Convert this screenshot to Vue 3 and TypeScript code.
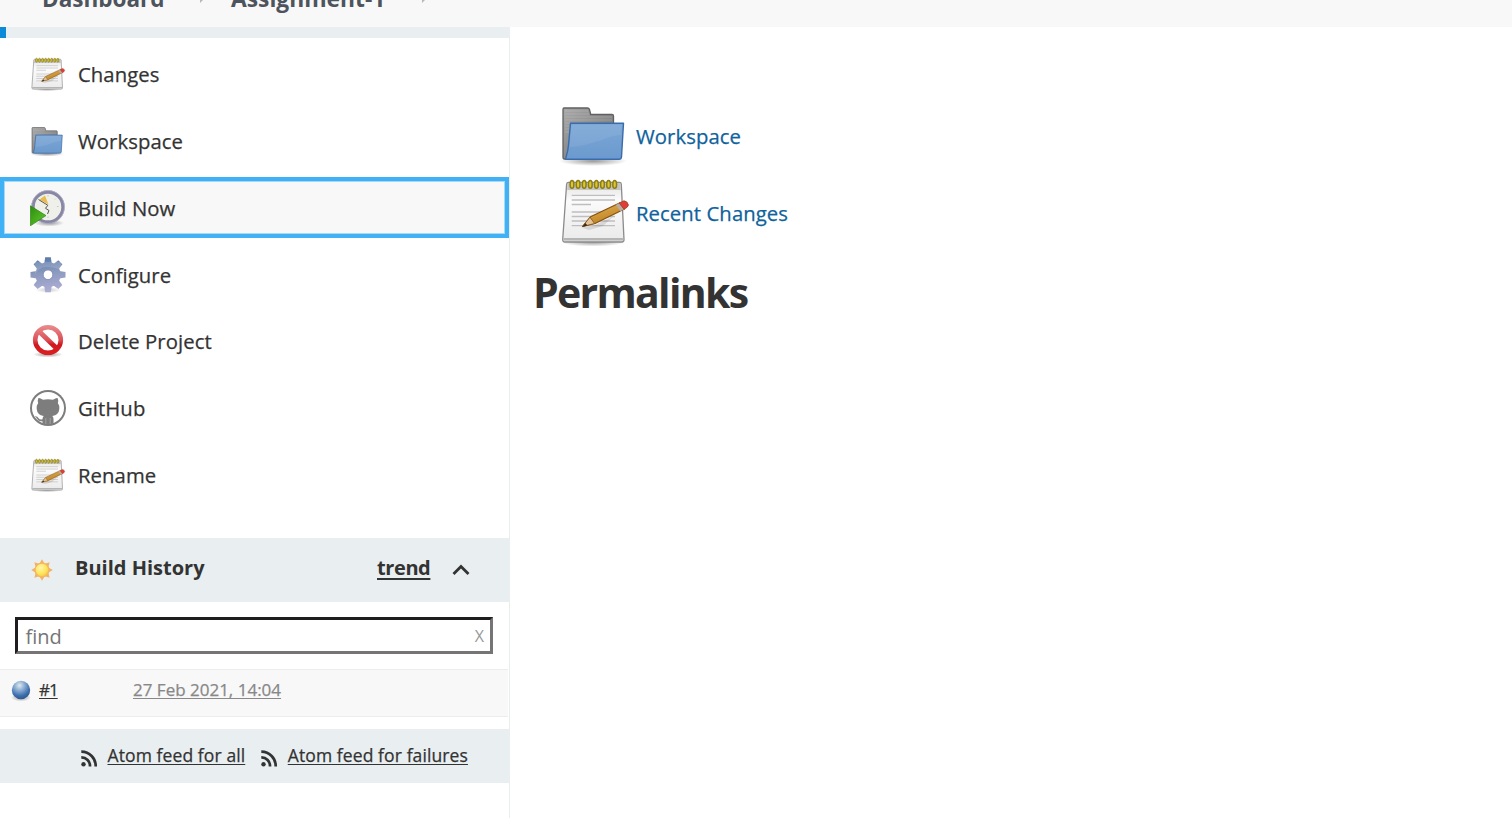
<script setup lang="ts">
interface Task { label: string; icon: string; active?: boolean }
const tasks: Task[] = [
  { label: 'Changes', icon: 'notepad' },
  { label: 'Workspace', icon: 'folder' },
  { label: 'Build Now', icon: 'clock', active: true },
  { label: 'Configure', icon: 'gear' },
  { label: 'Delete Project', icon: 'stop' },
  { label: 'GitHub', icon: 'github' },
  { label: 'Rename', icon: 'notepad' },
]
const links = [
  { label: 'Workspace', icon: 'folder' },
  { label: 'Recent Changes', icon: 'notepad' },
]
const feeds = ['Atom feed for all', 'Atom feed for failures']
const teeth = [0, 45, 90, 135, 180, 225, 270, 315]
const coils = [13, 19.1, 25.2, 31.3, 37.4, 43.5, 49.6, 55.7]
</script>

<template>
  <div class="page">
    <svg class="defs" width="0" height="0" aria-hidden="true">
      <defs>
        <linearGradient id="paper" x1="0" y1="0" x2="0" y2="1"><stop offset="0" stop-color="#e2e2e2" /><stop offset=".3" stop-color="#fbfbfb" /><stop offset="1" stop-color="#eaeaea" /></linearGradient>
        <linearGradient id="blue" x1="0" y1="0" x2="0" y2="1"><stop offset="0" stop-color="#7ba6d6" /><stop offset="1" stop-color="#6c9ace" /></linearGradient>
        <linearGradient id="grey" x1="0" y1="0" x2="1" y2="1"><stop offset="0" stop-color="#a8a8a8" /><stop offset="1" stop-color="#6f6f6f" /></linearGradient>
        <linearGradient id="pencil" x1="0" y1="0" x2=".5" y2="1"><stop offset="0" stop-color="#e9b85f" /><stop offset="1" stop-color="#b97d1c" /></linearGradient>
        <linearGradient id="play" x1="0" y1="0" x2="1" y2="1"><stop offset="0" stop-color="#2f8a10" /><stop offset="1" stop-color="#5fd02a" /></linearGradient>
        <linearGradient id="gearfill" gradientUnits="userSpaceOnUse" x1="14" y1="0" x2="20" y2="36"><stop offset="0" stop-color="#5878a8" /><stop offset=".45" stop-color="#8c9abf" /><stop offset="1" stop-color="#b0afd6" /></linearGradient>
        <linearGradient id="red" gradientUnits="userSpaceOnUse" x1="0" y1="3" x2="0" y2="34"><stop offset="0" stop-color="#e88a8a" /><stop offset=".45" stop-color="#dc5058" /><stop offset=".6" stop-color="#cf1820" /><stop offset="1" stop-color="#e02222" /></linearGradient>
        <radialGradient id="shade"><stop offset="0" stop-color="#000" stop-opacity=".4" /><stop offset="1" stop-color="#000" stop-opacity="0" /></radialGradient>
        <radialGradient id="sunfill" cx=".4" cy=".35" r=".7"><stop offset="0" stop-color="#fff6b0" /><stop offset=".6" stop-color="#fde55c" /><stop offset="1" stop-color="#f5c141" /></radialGradient>
        <radialGradient id="ball" cx=".42" cy=".25" r=".75"><stop offset="0" stop-color="#dfe9ee" /><stop offset=".35" stop-color="#8fb0d2" /><stop offset=".75" stop-color="#3d6fb0" /><stop offset="1" stop-color="#31588f" /></radialGradient>
        <mask id="gearmask"><rect width="36" height="36" fill="#000" /><path v-for="t in teeth" :key="t" d="M14 8L15.200 .2H20.800L22 8Z" :transform="`rotate(${t} 18 17.700)`" fill="#fff" /><circle cx="18" cy="17.700" r="12.600" fill="#fff" /><circle cx="18" cy="17.700" r="4.500" fill="#000" /></mask>
      </defs>
      <symbol id="i-notepad" viewBox="0 0 72 72">
        <ellipse cx="34" cy="66" rx="32" ry="4.5" fill="url(#shade)" />
        <path d="M9.5 6.5H60.5Q62.2 6.5 62.3 8.3L65 63.5Q65 66 62.8 66H6Q3.600 66 3.700 63.500L7.600 8.300Q7.800 6.500 9.500 6.500Z" fill="url(#paper)" stroke="#8b8b8b" stroke-width="1.300" />
        <path d="M4.500 62H64.300L64.500 64.500H4.500Z" fill="#b5b5b5" />
        <path d="M8.600 7.200H61.500L61.800 14H8.200Z" fill="#c4c4c4" />
        <path d="M12.700 19.300H56M12.700 24H56M12.700 28.500H32M12.700 36H56M12.700 40.500H56M12.700 45H56M12.700 49.700H56" stroke="#bebebe" stroke-width="1.300" />
        <ellipse v-for="c in coils" :key="c" :cx="c" cy="8.400" rx="1.900" ry="3.900" fill="#d9c832" stroke="#8d7d13" stroke-width="1.500" />
        <path d="M22 51.500L34 50L55 40L44 50L30 54Z" fill="#777" opacity=".22" />
        <path d="M23.500 50.500L31.500 40.800L61 26.800L65.500 33L36 47.500Z" fill="url(#pencil)" stroke="#85500f" stroke-width="1.100" stroke-linejoin="round" />
        <path d="M23.500 50.500L31 41.200L35.600 47.500Z" fill="#e2c397" stroke="#85500f" stroke-width=".8" />
        <path d="M23.300 50.800L26.300 46.900L28.600 49.600Z" fill="#3b2a16" />
        <path d="M56.700 28.900L61 26.800L65.500 33L61.300 35.200Z" fill="#b9aca2" />
        <path d="M60.200 27L65 24.800Q68.500 25.200 69.400 29Q69.400 31 65 33.300Z" fill="#e23b3b" stroke="#a04525" stroke-width=".9" />
      </symbol>
      <symbol id="i-folder" viewBox="0 0 72 72">
        <ellipse cx="34" cy="62" rx="34" ry="5" fill="url(#shade)" />
        <path d="M5 9H28.500Q30 9 30.500 10.500L31.700 15.500H53Q54.500 15.500 54.500 17V60H5Q4 60 4 58.500V10.500Q4 9 5 9Z" fill="url(#grey)" stroke="#606060" stroke-width="1.300" />
        <path d="M6 12H29M6 15H30M6 18H53M6 21H53M6 24H11M6 27H10M6 30H10M6 33H10" stroke="#fff" stroke-opacity=".16" stroke-width="1" />
        <path d="M11.500 24.200H64.500L62.500 58Q62.300 60.300 60 60.300H8Q6 60.700 7 58.500Q9 52 9.500 46Z" fill="url(#blue)" stroke="#3a6cab" stroke-width="1.400" stroke-linejoin="round" />
        <path d="M12.500 25.700H63L62 36C46 37 38 46 10.500 48Z" fill="#fff" opacity=".08" />
      </symbol>
      <symbol id="i-clock" viewBox="0 0 36 36">
        <ellipse cx="19" cy="33" rx="15" ry="3.500" fill="url(#shade)" />
        <circle cx="18" cy="17" r="15" fill="#f0f0eb" stroke="#8886a5" stroke-width="3.400" />
        <circle cx="18" cy="17" r="16.500" fill="none" stroke="#b7b6c8" stroke-width=".7" />
        <path d="M9.500 9.500L15 5.500L18.500 14.500Z" fill="#e8bd4d" />
        <path d="M8.500 9.500L17.800 15.300L15.500 18.300L19 20.500L17.500 24" fill="none" stroke="#55554b" stroke-width="1" />
        <path d="M18 5V6.500M28.500 16.500H27M26 8.500L25 9.500M18 28V26.500" stroke="#c4c4c4" stroke-width="1" />
        <path d="M.4 15.800L16 25.600L.4 35.800Z" fill="url(#play)" stroke="#2d8515" stroke-width=".7" />
      </symbol>
      <symbol id="i-gear" viewBox="0 0 36 36">
        <ellipse cx="18" cy="33" rx="13" ry="3" fill="url(#shade)" opacity=".5" />
        <g mask="url(#gearmask)">
          <rect width="36" height="36" fill="url(#gearfill)" />
          <path d="M5 18Q9 9 18 10T31 13V5H5Z" fill="#fff" opacity=".15" />
        </g>
        <circle cx="18" cy="17.700" r="4.900" fill="none" stroke="#8790b4" stroke-width=".8" />
      </symbol>
      <symbol id="i-stop" viewBox="0 0 36 36">
        <ellipse cx="18" cy="31.500" rx="15" ry="3" fill="url(#shade)" />
        <circle cx="18" cy="17" r="12.800" fill="#fff" stroke="url(#red)" stroke-width="4.600" />
        <path d="M9 8.300L27 25.800" stroke="url(#red)" stroke-width="5" />
      </symbol>
      <symbol id="i-github" viewBox="0 0 36 36">
        <circle cx="18" cy="18" r="18" fill="#7d7d7d" />
        <circle cx="18" cy="18" r="16" fill="#fff" />
        <path fill="#7d7d7d" d="M8.300 8.300Q8.800 7 13 9.800Q18 8.800 23 9.800Q27.200 7 27.700 8.300Q28.600 10.500 27.800 13Q29.800 15.500 29.300 19Q28.800 25 22.300 26Q23.500 27.200 23.500 29V33.500Q18 36 12.500 33.500V31.200Q8.500 31.800 7.200 29Q6.300 27.300 4.800 26.300Q7.200 25.800 8.600 28.200Q9.800 30 12.500 29.300Q12.600 27 13.700 26Q7.200 25 6.700 19Q6.200 15.500 8.200 13Q7.400 10.500 8.300 8.300Z" />
        <path d="M15.800 28V34M20.200 28V34" stroke="#a9a9a9" stroke-width=".8" />
      </symbol>
    </svg>

    <header class="crumbs">
      <span class="crumb dash">Dashboard</span>
      <svg class="tri" width="6" height="10" viewBox="0 0 6 10"><path d="M0 0L5 5L0 10Z" fill="#b5b8bd" /></svg>
      <span class="crumb assign">Assignment-1</span>
      <svg class="tri" width="6" height="10" viewBox="0 0 6 10"><path d="M0 0L5 5L0 10Z" fill="#b5b8bd" /></svg>
    </header>

    <div class="body">
      <aside class="side">
        <div class="strip"></div>
        <nav class="tasks">
          <a v-for="t in tasks" :key="t.label" class="task" :class="{ active: t.active }">
            <svg class="small-icon" width="36" height="36"><use :href="'#i-' + t.icon" /></svg>
            <span class="label">{{ t.label }}</span>
          </a>
        </nav>

        <section class="history">
          <svg class="sun" width="24" height="24" viewBox="0 0 24 24">
            <path v-for="t in teeth" :key="t" d="M9.500 5.500L12 1.200L14.500 5.500Z" :transform="`rotate(${t} 12 12)`" fill="#f4b066" />
            <circle cx="12" cy="12" r="6.900" fill="url(#sunfill)" stroke="#f3b75c" stroke-width="1.200" />
          </svg>
          <span class="htitle">Build History</span>
          <a class="trend">trend</a>
          <svg class="caret" width="18" height="12" viewBox="0 0 18 12"><path d="M1.500 10L9 2.500L16.500 10" fill="none" stroke="#333" stroke-width="2.800" /></svg>
        </section>

        <div class="find"><span class="hint">find</span><span class="clear">X</span></div>

        <div class="build">
          <svg class="orb" width="22" height="24" viewBox="0 0 22 24">
            <ellipse cx="11" cy="18.500" rx="10" ry="4" fill="url(#shade)" />
            <circle cx="11" cy="11" r="9.200" fill="url(#ball)" />
          </svg>
          <a class="num">#1</a>
          <a class="date">27 Feb 2021, 14:04</a>
        </div>

        <div class="feeds">
          <a v-for="f in feeds" :key="f" class="feed">
            <svg width="17" height="17" viewBox="0 0 17 17"><circle cx="2.500" cy="14.300" r="2.200" fill="#333" /><path d="M.3 7.400A8.600 8.600 0 0 1 9 16.500M.3 1.700A14.300 14.300 0 0 1 14.700 16.500" fill="none" stroke="#333" stroke-width="2.700" /></svg>
            <span>{{ f }}</span>
          </a>
        </div>
      </aside>

      <main class="main">
        <a v-for="l in links" :key="l.label" class="link">
          <svg width="72" height="72"><use :href="'#i-' + l.icon" /></svg>
          <span>{{ l.label }}</span>
        </a>
        <h2>Permalinks</h2>
      </main>
    </div>
  </div>
</template>

<style>
body { margin: 0; background: #fff; overflow: hidden; }
</style>
<style scoped>
.page { width: 1512px; height: 818px; overflow: hidden; display: flex; flex-direction: column; font-family: "Open Sans", "Noto Sans", sans-serif; color: #333; background: #fff; }
.page * { box-sizing: border-box; }
.page span, .page a, .page h2 { white-space: nowrap; }
.defs { position: absolute; }
.crumbs { height: 27px; flex: none; background: #f8f8f8; overflow: hidden; display: flex; align-items: flex-start; padding-left: 42px; }
.crumb { font-size: 22.500px; line-height: 30px; margin-top: -16.500px; font-weight: 700; color: #4d545d; flex: none; }
.dash { width: 158px; }
.assign { width: 192px; padding-left: 1px; font-size: 22.800px; }
.tri { margin-top: -7px; width: 6px; flex: none; margin-right: 24px; }
.body { display: flex; flex: 1; min-height: 0; }
.side { width: 510px; border-right: 1px solid #eaeced; display: flex; flex-direction: column; flex: none; }
.strip { height: 11px; flex: none; background: #e9eef1; border-left: 6px solid #0b8ad8; margin-right: -1px; }
.tasks { padding-top: 5.500px; height: 500px; flex: none; display: flex; flex-direction: column; gap: 5.850px; }
.task { height: 61px; flex: none; display: flex; align-items: center; padding: 0 0 0 30px; gap: 12px; font-size: 20.300px; letter-spacing: .08px; }
.label, .link span, .num, .date, .feed span { -webkit-text-stroke: .25px currentColor; }
.label { line-height: 30px; }
.active { background: #f8f8f8; box-shadow: inset 0 0 0 4px #40b1f5, inset 0 0 0 5px #a6d9f8; }
.history { height: 64px; flex: none; background: #e9eef1; display: flex; align-items: center; padding-left: 30px; margin-right: -1px; font-size: 20px; font-weight: 700; }
.sun { margin-right: 21px; }
.htitle { width: 302px; margin-top: -6px; }
.trend { width: 54px; margin-top: -6px; letter-spacing: -.4px; text-decoration: underline; text-decoration-thickness: 2px; text-underline-offset: 3px; }
.caret { margin-left: 21px; margin-top: -1px; }
.find { margin: 15px 16px 15px 15px; height: 37px; flex: none; border: 3px solid; border-color: #201d20 #767474 #767474 #201d20; display: flex; align-items: center; justify-content: space-between; padding: 0 6px 0 7.500px; color: #757575; font-size: 20px; line-height: 28px; }
.hint { padding-top: 2px; }
.clear { color: #999; font-size: 16px; }
.build { height: 48px; flex: none; margin-right: 1px; background: #f8f8f8; border: solid #ebedef; border-width: 1px 0; display: flex; align-items: flex-start; padding: 8px 0 0 10px; font-size: 17px; line-height: 24px; }
.orb { margin-top: 1px; }
.num { width: 94px; margin-left: 7px; letter-spacing: -1px; }
.num, .date { text-decoration: underline; text-underline-offset: 2px; }
.date { color: #888; }
.feeds { margin: 12px -1px 0 0; height: 54px; flex: none; background: #e9eef1; display: flex; align-items: center; padding-left: 81px; gap: 16px; font-size: 17.500px; line-height: 26px; letter-spacing: .1px; }
.feed { display: flex; align-items: center; gap: 9.500px; }
.feed svg { margin-top: 5px; flex: none; }
.feed span { margin-top: -2px; text-decoration: underline; text-underline-offset: 2px; }
.main { flex: 1; padding: 72px 0 0 49px; display: flex; flex-direction: column; gap: 5px; }
.link { display: flex; align-items: center; gap: 5px; height: 72px; color: #0f629c; font-size: 20.300px; letter-spacing: .08px; }
.link span { padding-top: 1px; }
h2 { margin: 11px 0 0 -26px; font-size: 41px; line-height: 56px; font-weight: 700; letter-spacing: -1.700px; }
</style>
